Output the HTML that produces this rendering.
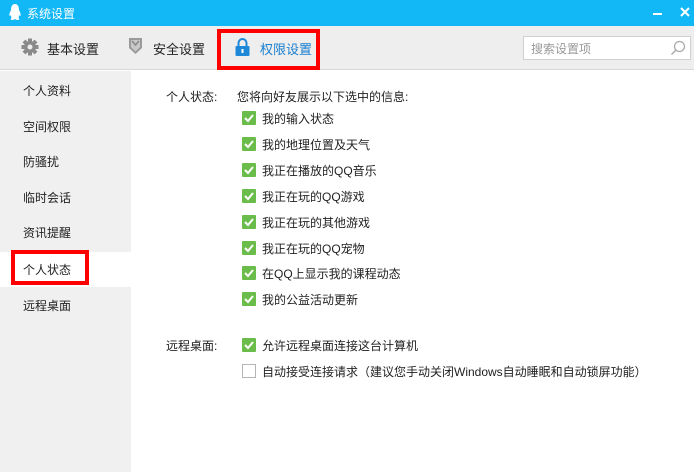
<!DOCTYPE html>
<html><head><meta charset="utf-8"><style>
*{margin:0;padding:0;box-sizing:border-box}
body{width:694px;height:472px;overflow:hidden;position:relative;background:#fff;font-family:"Liberation Sans","Microsoft YaHei","Noto Sans CJK SC",sans-serif;font-size:12px;color:#222}
.a{position:absolute;white-space:nowrap}
.title{left:0;top:0;width:694px;height:26px;background:#12b7f5;color:#fff}
.tool{left:0;top:26px;width:694px;height:44px;background:#eeeeee;border-bottom:1px solid #d8d8d8}
.side{left:0;top:71px;width:131px;height:401px;background:#f0f0f0}
.cb{position:absolute;width:14px;height:14px;background:#6bbd4b;border-radius:1px}
.cb svg{position:absolute;left:1px;top:1px}
.ucb{position:absolute;width:14px;height:14px;border:1px solid #b5b5b5;background:#fff}
</style></head><body>
<div class="a title">
 <svg class="a" style="left:9px;top:4px" width="12" height="17" viewBox="0 0 12 17"><path d="M6 0C3 0 2 3 2 6 1 8 0 10 0.5 12 1.5 12 2 11 2 11 2 13 3 14 1.5 15 2 16.5 5 16 6 15 7 16 10 16.5 10.5 15 9 14 10 13 10 11 10 11 10.5 12 11.5 12 12 10 11 8 10 6 10 3 9 0 6 0Z" fill="#fff"/></svg>
 <span class="a" style="left:27px;top:5px;font-size:12px">系统设置</span>
 <div class="a" style="left:653px;top:13px;width:9px;height:2px;background:#fff"></div>
 <svg class="a" style="left:680px;top:7px" width="10" height="10"><path d="M1 1L9 9M9 1L1 9" stroke="#fff" stroke-width="2"/></svg>
</div>
<div class="a tool">
 <svg class="a" style="left:21px;top:12px" width="18" height="18" viewBox="0 0 18 18"><g fill="#8a8a8a"><circle cx="9" cy="9" r="6"/><rect x="7" y="0.5" width="4" height="17"/><rect x="0.5" y="7" width="17" height="4"/><rect x="7" y="0.5" width="4" height="17" transform="rotate(45 9 9)"/><rect x="7" y="0.5" width="4" height="17" transform="rotate(-45 9 9)"/></g><circle cx="9" cy="9" r="2.5" fill="#eee"/></svg>
 <span class="a" style="left:47px;top:13px;font-size:13px">基本设置</span>
 <svg class="a" style="left:128px;top:11px" width="15" height="18" viewBox="0 0 15 18"><path d="M1 1H14V11L7.5 17 1 11Z" fill="#9a9a9a"/><path d="M3 3H12V10L7.5 14.5 3 10Z" fill="#c8c8c8"/><path d="M4 4L7.5 8 11 4" stroke="#888" stroke-width="1.5" fill="none"/></svg>
 <span class="a" style="left:153px;top:13px;font-size:13px">安全设置</span>
 <div class="a" style="left:217px;top:3px;width:103px;height:41px;border:4px solid #f00"></div>
 <svg class="a" style="left:235px;top:12px" width="15" height="18" viewBox="0 0 15 18"><path d="M3.5 8V5A4 4 0 0 1 11.5 5V8" stroke="#1e88d8" stroke-width="2" fill="none"/><rect x="0.5" y="8" width="14" height="10" rx="1" fill="#1e88d8"/><rect x="6.5" y="11" width="2" height="4" fill="#fff"/></svg>
 <span class="a" style="left:260px;top:13px;font-size:13px;color:#1a7fd0">权限设置</span>
 <div class="a" style="left:523px;top:10px;width:168px;height:24px;background:#fff;border:1px solid #d0d0d0"></div>
 <span class="a" style="left:531px;top:14px;color:#999;font-size:12px">搜索设置项</span>
 <svg class="a" style="left:670px;top:14px" width="16" height="16"><circle cx="9.5" cy="6.5" r="5" stroke="#aaa" stroke-width="1.3" fill="none"/><path d="M6 10L1.5 14.5" stroke="#aaa" stroke-width="1.5"/></svg>
</div>
<div class="a side"></div>
<div class="a" style="left:0;top:252px;width:131px;height:35px;background:#fff"></div>
<div class="a" style="left:11px;top:250px;width:78px;height:35px;border:4px solid #f00"></div>
<span class="a" style="left:23px;top:82px">个人资料</span>
<span class="a" style="left:23px;top:118px">空间权限</span>
<span class="a" style="left:23px;top:153px">防骚扰</span>
<span class="a" style="left:23px;top:189px">临时会话</span>
<span class="a" style="left:23px;top:224px">资讯提醒</span>
<span class="a" style="left:23px;top:261px">个人状态</span>
<span class="a" style="left:23px;top:297px">远程桌面</span>

<span class="a" style="left:166px;top:88px">个人状态:</span>
<span class="a" style="left:237px;top:88px">您将向好友展示以下选中的信息:</span>
<div id="rows"></div>
<span class="a" style="left:166px;top:337px">远程桌面:</span>
<div class="cb" style="left:242px;top:338px"><svg width="12" height="12"><path d="M2 6L5 9 10 3" stroke="#fff" stroke-width="2" fill="none"/></svg></div>
<span class="a" style="left:262px;top:337px">允许远程桌面连接这台计算机</span>
<div class="ucb" style="left:242px;top:364px"></div>
<span class="a" style="left:262px;top:363px">自动接受连接请求（建议您手动关闭Windows自动睡眠和自动锁屏功能）</span>
<script>
var t=["我的输入状态","我的地理位置及天气","我正在播放的QQ音乐","我正在玩的QQ游戏","我正在玩的其他游戏","我正在玩的QQ宠物","在QQ上显示我的课程动态","我的公益活动更新"],h="";
t.forEach(function(s,i){var y=111+i*25.9;h+='<div class="cb" style="left:242px;top:'+y+'px"><svg width="12" height="12"><path d="M2 6L5 9 10 3" stroke="#fff" stroke-width="2" fill="none"/></svg></div><span class="a" style="left:262px;top:'+(y-1)+'px">'+s+'</span>';});
document.getElementById("rows").innerHTML=h;
</script>
</body></html>
